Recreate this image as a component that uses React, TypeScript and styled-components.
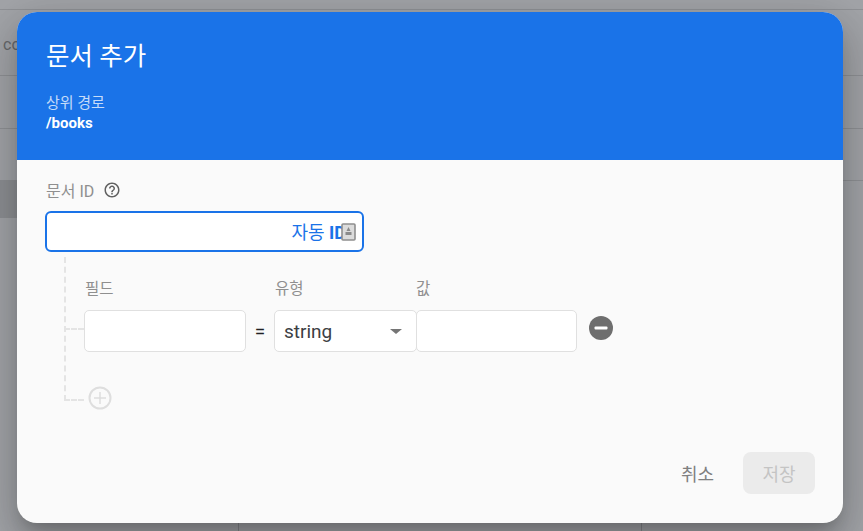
import React from 'react';
import styled, { createGlobalStyle } from 'styled-components';

const Global = createGlobalStyle`
  html, body {
    margin: 0;
    padding: 0;
    width: 863px;
    height: 531px;
    overflow: hidden;
    font-family: Roboto, "Noto Sans CJK KR", sans-serif;
  }
`;

const Backdrop = styled.div`
  position: relative;
  width: 863px;
  height: 531px;
  overflow: hidden;
  background: #a2a4a8;
`;

// what shows of the console page behind the scrim
const PageLine = styled.div<{ $top: number }>`
  position: absolute;
  left: 0;
  right: 0;
  top: ${p => p.$top}px;
  height: 1px;
  background: #8f9195;
`;

const PageCol = styled.div<{ $left: number }>`
  position: absolute;
  left: ${p => p.$left}px;
  top: 500px;
  bottom: 0;
  width: 1px;
  background: #86888c;
`;

const PageRow = styled.div`
  position: absolute;
  left: 0;
  width: 400px;
  top: 180px;
  height: 38px;
  background: #8d8f93;
`;

const PageText = styled.span`
  position: absolute;
  left: 3px;
  top: 35px;
  font-size: 16px;
  color: #66686b;
`;

const Dialog = styled.div`
  position: absolute;
  left: 17px;
  top: 12px;
  width: 826px;
  height: 511px;
  display: flex;
  flex-direction: column;
  border-radius: 20px;
  overflow: hidden;
  background: #fafafa;
  box-shadow: 0 11px 15px -7px rgba(0, 0, 0, 0.2), 0 24px 38px 3px rgba(0, 0, 0, 0.14),
    0 9px 46px 8px rgba(0, 0, 0, 0.12);
`;

const Header = styled.header`
  height: 148px;
  flex: none;
  box-sizing: border-box;
  padding: 28px 29px 0;
  background: #1a73e8;
  color: #fff;
`;

const Title = styled.h1`
  margin: 0 0 22px;
  font-size: 25.5px;
  line-height: 32px;
  font-weight: 400;
`;

const PathLabel = styled.div`
  font-size: 15px;
  line-height: 19px;
  color: rgba(255, 255, 255, 0.75);
`;

const PathValue = styled.div`
  font-size: 15px;
  line-height: 20px;
  font-weight: 700;
`;

const Body = styled.div`
  flex: 1;
  display: flex;
  flex-direction: column;
  padding: 19px 28px 0;
`;

const LabelRow = styled.div`
  display: flex;
  align-items: center;
  gap: 9px;
  height: 22px;
  margin: 0 0 10px 1px;
  font-size: 16px;
  color: #8f8f8f;
`;

const IdBox = styled.div`
  width: 319px;
  height: 41px;
  box-sizing: border-box;
  display: flex;
  align-items: center;
  justify-content: flex-end;
  padding-right: 6px;
  border: 2px solid #1a73e8;
  border-radius: 6px;
  background: #fff;
`;

const AutoId = styled.span`
  font-size: 18px;
  color: #1a73e8;
  margin: -2px -5px 0 0;
  b {
    font-weight: 700;
  }
`;

const Fields = styled.div`
  position: relative;
  margin-left: 19px;
  height: 150px;
  padding-left: 20px;
  padding-top: 27px;
`;

const TreeV = styled.div`
  position: absolute;
  left: 0;
  top: 5px;
  height: 144px;
  border-left: 2px dashed #e4e4e4;
`;

const TreeH = styled.div<{ $top: number }>`
  position: absolute;
  left: 0;
  top: ${p => p.$top}px;
  width: 20px;
  border-top: 2px dashed #e4e4e4;
`;

const ColLabels = styled.div`
  display: grid;
  grid-template-columns: 190px 141px 160px;
  padding-left: 1px;
  font-size: 15.5px;
  line-height: 20px;
  color: #8f8f8f;
  margin-bottom: 11px;
`;

const FieldRow = styled.div`
  display: flex;
  align-items: center;
`;

const Input = styled.div<{ $width: number; $overlap?: boolean }>`
  width: ${p => p.$width}px;
  height: 42px;
  box-sizing: border-box;
  margin-left: ${p => (p.$overlap ? '-1px' : '0')};
  border: 1px solid #e0e0e0;
  border-radius: 5px;
  background: #fff;
`;

const Eq = styled.span`
  width: 28px;
  text-align: center;
  font-size: 19px;
  color: #202124;
`;

const Select = styled.div`
  width: 143px;
  height: 42px;
  box-sizing: border-box;
  display: flex;
  align-items: center;
  justify-content: space-between;
  padding: 0 14px 0 9px;
  border: 1px solid #e0e0e0;
  border-radius: 5px;
  background: #fff;
  font-size: 19px;
  color: #3c4043;
`;

const Arrow = styled.span`
  width: 0;
  height: 0;
  border-left: 6px solid transparent;
  border-right: 6px solid transparent;
  border-top: 5px solid #757575;
`;

const RoundBtn = styled.span`
  display: flex;
  margin-left: 12px;
  margin-top: -6px;
`;

const AddBtn = styled.span`
  position: absolute;
  left: 23px;
  top: 133px;
  display: flex;
`;

const Footer = styled.footer`
  display: flex;
  justify-content: flex-end;
  align-items: center;
  margin-top: auto;
  padding: 0 0 29px;
  gap: 29px;
`;

const CancelBtn = styled.span`
  font-size: 18px;
  color: #808080;
`;

const SaveBtn = styled.span`
  width: 72px;
  height: 42px;
  display: flex;
  align-items: center;
  justify-content: center;
  border-radius: 8px;
  background: #ebebeb;
  font-size: 18px;
  color: #c4c4c4;
`;

export default function App() {
  return (
    <Backdrop>
      <Global />
      <PageLine $top={9} />
      <PageLine $top={75} />
      <PageLine $top={128} />
      <PageLine $top={180} />
      <PageRow />
      <PageCol $left={238} />
      <PageCol $left={641} />
      <PageText>co</PageText>
      <Dialog>
        <Header>
          <Title>문서 추가</Title>
          <PathLabel>상위 경로</PathLabel>
          <PathValue>/books</PathValue>
        </Header>
        <Body>
          <LabelRow>
            문서 ID
            <svg width="18" height="18" viewBox="0 0 24 24" fill="#616161">
              <path d="M11 18h2v-2h-2v2zm1-16C6.48 2 2 6.48 2 12s4.48 10 10 10 10-4.48 10-10S17.52 2 12 2zm0 18c-4.41 0-8-3.59-8-8s3.59-8 8-8 8 3.59 8 8-3.59 8-8 8zm0-14c-2.21 0-4 1.79-4 4h2c0-1.1.9-2 2-2s2 .9 2 2c0 2-3 1.75-3 5h2c0-2.25 3-2.5 3-5 0-2.21-1.79-4-4-4z" />
            </svg>
          </LabelRow>
          <IdBox>
            <AutoId>자동 <b>ID</b></AutoId>
            <svg width="15" height="18" viewBox="0 0 15 18">
              <rect x="1" y="1" width="13" height="16" rx="1" fill="#dcdcdc" stroke="#8f8f8f" strokeWidth="1.6" />
              <path d="M7.5 4l2 4h-4z M4.5 9h6v3h-6z" fill="#8a8a8a" />
            </svg>
          </IdBox>
          <Fields>
            <TreeV />
            <TreeH $top={76} />
            <TreeH $top={147} />
            <ColLabels>
              <span>필드</span>
              <span>유형</span>
              <span>값</span>
            </ColLabels>
            <FieldRow>
              <Input $width={162} />
              <Eq>=</Eq>
              <Select>
                string
                <Arrow />
              </Select>
              <Input $width={161} $overlap />
              <RoundBtn>
                <svg width="24" height="24" viewBox="0 0 24 24">
                  <circle cx="12" cy="12" r="12" fill="#6e6e6e" />
                  <rect x="5.5" y="10.5" width="13" height="3" rx="1" fill="#fff" />
                </svg>
              </RoundBtn>
            </FieldRow>
            <AddBtn>
              <svg width="26" height="26" viewBox="0 0 26 26" fill="none" stroke="#dedede">
                <circle cx="13" cy="13" r="10.5" strokeWidth="2" />
                <path d="M13 7v12M7 13h12" strokeWidth="1.5" />
              </svg>
            </AddBtn>
          </Fields>
          <Footer>
            <CancelBtn>취소</CancelBtn>
            <SaveBtn>저장</SaveBtn>
          </Footer>
        </Body>
      </Dialog>
    </Backdrop>
  );
}
